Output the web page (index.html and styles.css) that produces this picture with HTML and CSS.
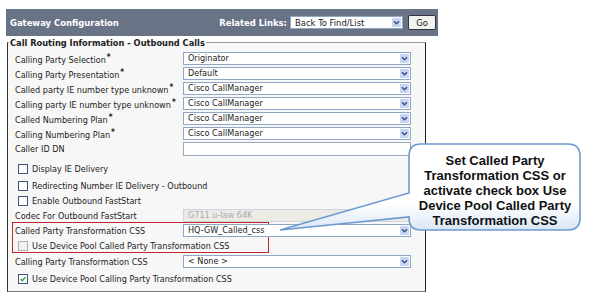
FILE: index.html
```html
<!DOCTYPE html>
<html lang="en">
<head>
  <meta charset="UTF-8" />
  <title>Gateway Configuration</title>
  <link rel="stylesheet" href="styles.css">
</head>
<body>
  <div class="page">
    <div class="bar">
      <span class="bar-title">Gateway Configuration</span>
      <div class="links">
        <span class="links-label">Related Links:</span>
        <div class="sel sel-links">Back To Find/List<svg class="arr" viewBox="0 0 9 9"><path d="M2 3.2 L4.5 5.8 L7 3.2" /></svg></div>
        <div class="go">Go</div>
      </div>
    </div>

    <fieldset class="box">
      <legend>Call Routing Information - Outbound Calls</legend>

      <div class="row"><span class="lbl">Calling Party Selection<b>*</b></span><div class="sel">Originator<svg class="arr" viewBox="0 0 9 9"><path d="M2 3.2 L4.5 5.8 L7 3.2" /></svg></div></div>
      <div class="row"><span class="lbl">Calling Party Presentation<b>*</b></span><div class="sel">Default<svg class="arr" viewBox="0 0 9 9"><path d="M2 3.2 L4.5 5.8 L7 3.2" /></svg></div></div>
      <div class="row"><span class="lbl">Called party IE number type unknown<b>*</b></span><div class="sel">Cisco CallManager<svg class="arr" viewBox="0 0 9 9"><path d="M2 3.2 L4.5 5.8 L7 3.2" /></svg></div></div>
      <div class="row"><span class="lbl">Calling party IE number type unknown<b>*</b></span><div class="sel">Cisco CallManager<svg class="arr" viewBox="0 0 9 9"><path d="M2 3.2 L4.5 5.8 L7 3.2" /></svg></div></div>
      <div class="row"><span class="lbl">Called Numbering Plan<b>*</b></span><div class="sel">Cisco CallManager<svg class="arr" viewBox="0 0 9 9"><path d="M2 3.2 L4.5 5.8 L7 3.2" /></svg></div></div>
      <div class="row"><span class="lbl">Calling Numbering Plan<b>*</b></span><div class="sel">Cisco CallManager<svg class="arr" viewBox="0 0 9 9"><path d="M2 3.2 L4.5 5.8 L7 3.2" /></svg></div></div>
      <div class="row"><span class="lbl">Caller ID DN</span><div class="txt"></div></div>

      <div class="chk chk-first"><span class="cb"></span>Display IE Delivery</div>
      <div class="chk"><span class="cb"></span>Redirecting Number IE Delivery - Outbound</div>
      <div class="chk chk-short"><span class="cb"></span>Enable Outbound FastStart</div>
      <div class="row"><span class="lbl">Codec For Outbound FastStart</span><div class="sel sel-off">G711 u-law 64K</div></div>

      <div class="hl">
        <div class="row"><span class="lbl">Called Party Transformation CSS</span><div class="sel">HQ-GW_Called_css<svg class="arr" viewBox="0 0 9 9"><path d="M2 3.2 L4.5 5.8 L7 3.2" /></svg></div></div>
        <div class="chk chk-mid"><span class="cb cb-off"></span>Use Device Pool Called Party Transformation CSS</div>
      </div>

      <div class="row"><span class="lbl">Calling Party Transformation CSS</span><div class="sel">&lt; None &gt;<svg class="arr" viewBox="0 0 9 9"><path d="M2 3.2 L4.5 5.8 L7 3.2" /></svg></div></div>
      <div class="chk chk-last"><span class="cb cb-on"><svg viewBox="0 0 9 9"><path d="M1.8 4.6 L3.7 6.5 L7.3 2.4" /></svg></span>Use Device Pool Calling Party Transformation CSS</div>
    </fieldset>
  </div>

  <div class="callout">
    <svg class="callout-shape" viewBox="0 0 320 100">
      <defs>
        <linearGradient id="cfill" x1="0" y1="0" x2="0" y2="1">
          <stop offset="0" stop-color="#ffffff" />
          <stop offset="0.7" stop-color="#ffffff" />
          <stop offset="1" stop-color="#d9e6f6" />
        </linearGradient>
      </defs>
      <path d="M151 6 H298 Q310 6 310 18 V80 Q310 92 298 92 H151 Q139 92 139 80 V79 L10 92 L139 55 V18 Q139 6 151 6 Z" fill="url(#cfill)" stroke="#6b9ad0" stroke-width="1.6" />
    </svg>
    <div class="callout-text">Set Called Party Transformation CSS or activate check box Use Device Pool Called Party Transformation CSS</div>
  </div>
</body>
</html>
```

FILE: styles.css
```css
body {
  margin: 0;
  background: #fff;
  font-family: "DejaVu Sans Condensed", "DejaVu Sans", sans-serif;
  font-size: 9px;
  color: #222;
}
.page {
  width: 432px;
  padding: 9px 0 0 6px;
}
.bar {
  height: 27px;
  background: #687386;
  display: flex;
  align-items: center;
  justify-content: space-between;
  padding: 0 2px 0 4px;
  color: #fff;
  font-weight: bold;
  font-size: 9.4px;
}
.links {
  display: flex;
  align-items: center;
}
.links-label {
  margin-right: 3px;
}
.sel {
  position: relative;
  height: 11px;
  line-height: 11px;
  border: 1px solid #8fa6c4;
  background: #fff;
  padding-left: 4px;
  color: #222;
  font-weight: normal;
  font-size: 9px;
  white-space: nowrap;
}
.sel .arr {
  position: absolute;
  right: 1px;
  top: 1px;
  width: 9px;
  height: 9px;
  background: #c7d6f4;
}
.arr path {
  fill: none;
  stroke: #3c4f7a;
  stroke-width: 1.4;
}
.sel-links {
  width: 107px;
  font-size: 9.4px;
}
.go {
  margin-left: 5px;
  width: 26px;
  height: 13px;
  line-height: 13px;
  border: 1px solid #334;
  border-radius: 2px;
  background: #f2f2ee;
  color: #222;
  font-weight: normal;
  font-size: 9.4px;
  text-align: center;
}
.box {
  margin: 1px 0 0 1px;
  width: 410px;
  height: 250px;
  padding: 3px 0 0 7px;
  border: 1px solid #999;
  border-left-color: #333;
  border-right-color: #222;
  border-bottom-color: #777;
  background: #f7f7f7;
  box-sizing: content-box;
}
.box legend {
  padding: 0 1px;
  margin-left: -6px;
  font-weight: bold;
  font-size: 9.2px;
  color: #222;
}
.row {
  display: flex;
  align-items: center;
  height: 15px;
}
.lbl {
  width: 168px;
  flex: none;
  white-space: nowrap;
}
.lbl b {
  font-size: 8px;
  vertical-align: 3px;
  margin-left: 1px;
}
.row .sel {
  width: 222px;
}
.txt {
  width: 226px;
  height: 12px;
  border: 1px solid #9ab;
  background: #fff;
}
.sel-off {
  background: #ecebe6;
  color: #aaa;
  border-color: #cdd5df;
}
.chk {
  display: flex;
  align-items: center;
  height: 17px;
  padding-left: 3px;
}
.chk-first {
  margin-top: 4px;
}
.chk-short {
  height: 14px;
}
.chk-mid {
  height: 16px;
}
.chk-last {
  height: 19px;
}
.cb {
  width: 8px;
  height: 8px;
  border: 1px solid #3a5680;
  background: #fff;
  margin-right: 4px;
  flex: none;
}
.cb-off {
  border-color: #b0b0b0;
  background: #f2f2f2;
}
.cb-on svg {
  display: block;
  width: 8px;
  height: 8px;
}
.cb-on path {
  fill: none;
  stroke: #20a040;
  stroke-width: 1.6;
}
.hl {
  position: relative;
}
.hl::before {
  content: "";
  position: absolute;
  left: -3px;
  top: -1px;
  width: 255px;
  height: 29px;
  border: 1.5px solid #c2262d;
}
.callout {
  position: absolute;
  left: 270px;
  top: 138px;
  width: 320px;
  height: 100px;
}
.callout-shape {
  position: absolute;
  left: 0;
  top: 0;
  width: 320px;
  height: 100px;
}
.callout-text {
  position: absolute;
  left: 142px;
  top: 15px;
  width: 166px;
  text-align: center;
  font-family: "Liberation Sans", Arial, sans-serif;
  font-weight: bold;
  font-size: 13px;
  line-height: 15px;
  color: #111;
}
```
